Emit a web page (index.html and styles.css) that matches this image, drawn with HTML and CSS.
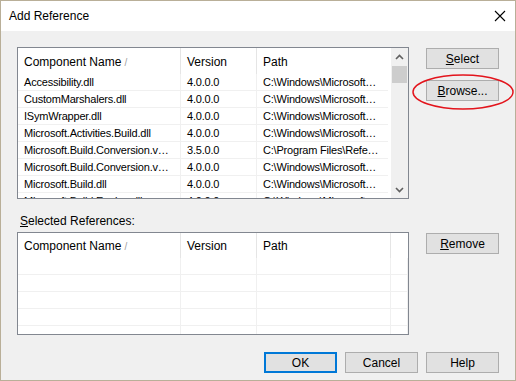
FILE: index.html
```html
<!DOCTYPE html>
<html lang="en">
<head>
    <meta charset="UTF-8">
    <title>Add Reference</title>
    <link rel="stylesheet" href="styles.css">
</head>
<body>
    <div class="window">
        <div class="titlebar">
            <span class="title">Add Reference</span>
            <svg class="close" width="12" height="12" viewBox="0 0 12 12">
                <path d="M1 1 L11 11 M11 1 L1 11" stroke="#000" stroke-width="1.1" fill="none"/>
            </svg>
        </div>
        <div class="content">
            <!-- Available components -->
            <div class="section">
                <div class="list list-top">
                    <div class="list-body">
                        <table class="grid">
                            <thead>
                                <tr>
                                    <th class="col-name">Component Name<span class="sort">/</span></th>
                                    <th class="col-version">Version</th>
                                    <th class="col-path">Path</th>
                                    <th class="col-fill"></th>
                                </tr>
                            </thead>
                            <tbody>
                                <tr><td>Accessibility.dll</td><td>4.0.0.0</td><td>C:\Windows\Microsoft…</td><td></td></tr>
                                <tr><td>CustomMarshalers.dll</td><td>4.0.0.0</td><td>C:\Windows\Microsoft…</td><td></td></tr>
                                <tr><td>ISymWrapper.dll</td><td>4.0.0.0</td><td>C:\Windows\Microsoft…</td><td></td></tr>
                                <tr><td>Microsoft.Activities.Build.dll</td><td>4.0.0.0</td><td>C:\Windows\Microsoft…</td><td></td></tr>
                                <tr><td>Microsoft.Build.Conversion.v…</td><td>3.5.0.0</td><td>C:\Program Files\Refe…</td><td></td></tr>
                                <tr><td>Microsoft.Build.Conversion.v…</td><td>4.0.0.0</td><td>C:\Windows\Microsoft…</td><td></td></tr>
                                <tr><td>Microsoft.Build.dll</td><td>4.0.0.0</td><td>C:\Windows\Microsoft…</td><td></td></tr>
                                <tr><td>Microsoft.Build.Engine.dll</td><td>4.0.0.0</td><td>C:\Windows\Microsoft…</td><td></td></tr>
                            </tbody>
                        </table>
                    </div>
                    <div class="scrollbar">
                        <div class="arrow">
                            <svg width="9" height="6" viewBox="0 0 9 6"><path d="M1 5 L4.5 1.5 L8 5" stroke="#606060" stroke-width="1.6" fill="none"/></svg>
                        </div>
                        <div class="track"><div class="thumb"></div></div>
                        <div class="arrow">
                            <svg width="9" height="6" viewBox="0 0 9 6"><path d="M1 1 L4.5 4.5 L8 1" stroke="#606060" stroke-width="1.6" fill="none"/></svg>
                        </div>
                    </div>
                </div>
                <div class="side-buttons">
                    <button class="btn"><u>S</u>elect</button>
                    <button class="btn"><u>B</u>rowse...</button>
                </div>
            </div>

            <div class="label"><u>S</u>elected References:</div>

            <!-- Selected references -->
            <div class="section">
                <div class="list list-bottom">
                    <div class="list-body">
                        <table class="grid">
                            <thead>
                                <tr>
                                    <th class="col-name">Component Name<span class="sort">/</span></th>
                                    <th class="col-version">Version</th>
                                    <th class="col-path">Path</th>
                                    <th class="col-fill"></th>
                                </tr>
                            </thead>
                            <tbody>
                                <tr><td></td><td></td><td></td><td></td></tr>
                                <tr><td></td><td></td><td></td><td></td></tr>
                                <tr><td></td><td></td><td></td><td></td></tr>
                                <tr><td></td><td></td><td></td><td></td></tr>
                                <tr><td></td><td></td><td></td><td></td></tr>
                            </tbody>
                        </table>
                    </div>
                </div>
                <div class="side-buttons">
                    <button class="btn"><u>R</u>emove</button>
                </div>
            </div>

            <div class="footer">
                <button class="btn btn-default">OK</button>
                <button class="btn">Cancel</button>
                <button class="btn">Help</button>
            </div>
        </div>

        <!-- annotation around Browse -->
        <svg class="highlight" width="110" height="40" viewBox="0 0 110 40">
            <ellipse cx="55" cy="20" rx="50" ry="17" stroke="#e3141c" stroke-width="1.5" fill="none"/>
        </svg>
    </div>
</body>
</html>
```

FILE: styles.css
```css
html, body {
    margin: 0;
    padding: 0;
}

body {
    font-family: "Liberation Sans", Arial, sans-serif;
    font-size: 12px;
    color: #000;
}

.window {
    position: relative;
    width: 516px;
    height: 381px;
    box-sizing: border-box;
    border: 1px solid #b9af98;
    background-color: #f0f0f0;
    overflow: hidden;
}

.titlebar {
    height: 30px;
    background-color: #ffffff;
    display: flex;
    align-items: center;
    justify-content: space-between;
    padding: 0 9px 0 8px;
}

.title {
    font-size: 12px;
}

.content {
    padding: 16px 16px 0 16px;
}

.section {
    display: flex;
    gap: 17px;
}

.list {
    width: 392px;
    box-sizing: border-box;
    border: 1px solid #828790;
    background-color: #ffffff;
    display: flex;
    overflow: hidden;
}

.list-top {
    height: 152px;
}

.list-bottom {
    height: 103px;
}

.list-body {
    flex: 1;
    overflow: hidden;
}

.grid {
    border-collapse: collapse;
    table-layout: fixed;
    width: 100%;
}

.grid th {
    height: 25px;
    padding: 1px 0 0 6px;
    text-align: left;
    font-weight: normal;
    font-size: 12px;
    border-right: 1px solid #e5e5e5;
    white-space: nowrap;
    overflow: hidden;
}

.list-bottom .grid th {
    height: 24px;
    padding-top: 1px;
}

.grid th.col-fill {
    border-right: none;
}

.grid td {
    height: 16px;
    padding: 0 0 0 6px;
    font-size: 11px;
    letter-spacing: -0.2px;
    border-bottom: 1px solid #f0f0f0;
    border-right: 1px solid #f0f0f0;
    white-space: nowrap;
    overflow: hidden;
}

.col-name {
    width: 156px;
}

.col-version {
    width: 69px;
}

.col-path {
    width: 127px;
}

.sort {
    color: #a0a0a0;
    font-size: 10px;
    margin-left: 3px;
}

.scrollbar {
    width: 17px;
    margin-left: 3px;
    background-color: #f0f0f0;
    display: flex;
    flex-direction: column;
}

.arrow {
    height: 17px;
    display: flex;
    align-items: center;
    justify-content: center;
}

.track {
    flex: 1;
    padding: 1px 1px 0 1px;
}

.thumb {
    height: 17px;
    background-color: #cdcdcd;
}

.side-buttons {
    display: flex;
    flex-direction: column;
    gap: 11px;
    padding-top: 1px;
}

.btn {
    width: 73px;
    height: 21px;
    box-sizing: border-box;
    padding: 0;
    font-family: "Liberation Sans", Arial, sans-serif;
    font-size: 12px;
    color: #000;
    background-color: #e1e1e1;
    border: 1px solid #adadad;
}

.btn-default {
    border: 2px solid #0078d7;
}

.label {
    margin-top: 14px;
    height: 16px;
    line-height: 16px;
    padding-left: 3px;
    margin-bottom: 3px;
}

.footer {
    display: flex;
    justify-content: flex-end;
    gap: 8px;
    margin-top: 17px;
}

.highlight {
    position: absolute;
    left: 407px;
    top: 71px;
}
```
